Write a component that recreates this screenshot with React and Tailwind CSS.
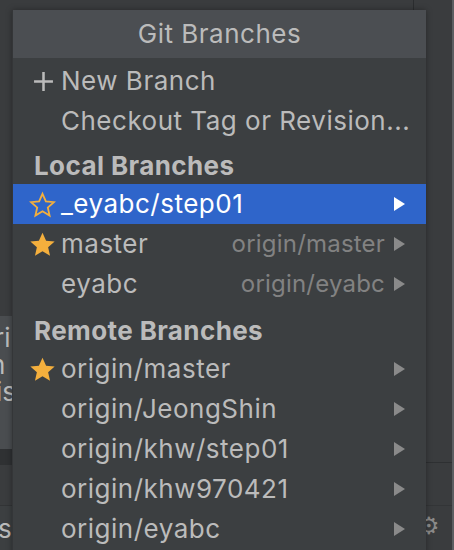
import React from "react";

const font = { fontFamily: "Inter, 'Noto Sans', sans-serif" };

function StarFilled() {
  return (
    <svg width="27" height="27" viewBox="0 0 24 24">
      <path d="M12 1.5l3.2 7.1 7.6.7-5.8 5.1 1.7 7.6L12 18l-6.7 4 1.7-7.6-5.8-5.1 7.6-.7z" fill="#f4af3d" />
    </svg>
  );
}

function StarOutline() {
  return (
    <svg width="27" height="27" viewBox="0 0 24 24">
      <path d="M12 2.5l3 6.7 7.2.7-5.5 4.8 1.6 7.1L12 18l-6.3 3.8 1.6-7.1-5.5-4.8 7.2-.7z" fill="none" stroke="#f4af3d" strokeWidth="1.6" strokeLinejoin="miter" />
    </svg>
  );
}

function Arrow({ color }) {
  return (
    <svg width="11" height="14" viewBox="0 0 11 14">
      <path d="M0 0L11 7L0 14Z" fill={color} />
    </svg>
  );
}

function Row({ icon, label, right, selected, arrow }) {
  return (
    <div className={`flex items-center h-[40px] pl-[16px] pr-[21px] whitespace-nowrap ${selected ? "bg-[#2f65ca]" : ""}`}>
      <div className="w-[32px] shrink-0 flex items-center justify-start">{icon}</div>
      <span className={`text-[26px] leading-none tracking-[0.5px] ${selected ? "text-white" : "text-[#bbbbbb]"}`}>{label}</span>
      <div className="flex-1" />
      {right && <span className="text-[24px] leading-none tracking-[0.2px] text-[#828282] mr-[9px]">{right}</span>}
      {arrow && <Arrow color={selected ? "#ffffff" : "#8a8a8a"} />}
    </div>
  );
}

function Section({ title, h }) {
  return (
    <div className={`flex items-end ${h} pl-[21px] pb-[5px] whitespace-nowrap`}>
      <span className="text-[26px] leading-none font-bold tracking-[0.4px] text-[#bbbbbb]">{title}</span>
    </div>
  );
}

export default function App() {
  return (
    <div className="relative w-[454px] h-[550px] overflow-hidden bg-[#3a3c3e] flex" style={font}>
      {/* background IDE: left strip */}
      <div className="w-[12px] flex flex-col shrink-0">
        <div className="h-[316px] bg-[#3a3c3e]" />
        <div className="h-[133px] bg-[#4a4d50] overflow-hidden text-[26px] text-[#bbbbbb] leading-[27px] pt-[8px]">
          <div className="-ml-[6px]">ri</div>
          <div className="-ml-[10px]">n</div>
          <div className="-ml-[4px]">is</div>
        </div>
        <div className="h-[16px] bg-[#2f3133]" />
        <div className="h-[41px] bg-[#3a3c3e] border-b border-[#323436]" />
        <div className="flex-1 bg-[#3c3f41] overflow-hidden text-[26px] text-[#bbbbbb] leading-none pt-[10px] -ml-[2px]">s</div>
      </div>
      {/* middle */}
      <div className="w-[414px] shrink-0">
        <div className="w-[402px] h-[12px] border-r border-[#2b2d2f]" />
      </div>
      {/* right strip */}
      <div className="w-[26px] flex flex-col shrink-0">
        <div className="h-[463px] border-b border-[#2e3032]" />
        <div className="h-[43px] border-b border-[#333537]" />
        <div className="flex-1 text-[24px] text-[#8a8a8a] leading-none pt-[8px] -ml-[8px]">⚙</div>
      </div>
      <div className="w-[2px] bg-[#5b5e61] shrink-0" />

      {/* popup overlay */}
      <div className="absolute left-[12px] top-[10px] w-[414px] h-[560px] bg-[#3c3f41] border-l border-[#343638] shadow-[0_0_6px_rgba(0,0,0,0.35)]">
        <div className="h-[48px] bg-[#4b4e52] flex items-center justify-center">
          <span className="text-[26px] leading-none tracking-[0.5px] text-[#bbbbbb]">Git Branches</span>
        </div>
        <div className="pt-[3px]">
          <Row
            icon={
              <svg width="21" height="21" viewBox="0 0 20 20" className="ml-[4px]">
                <path d="M10 1v18M1 10h18" stroke="#bbbbbb" strokeWidth="2.4" />
              </svg>
            }
            label="New Branch"
          />
          <Row label="Checkout Tag or Revision..." />
          <Section title="Local Branches" h="h-[43px]" />
          <Row icon={<StarOutline />} label="_eyabc/step01" selected arrow />
          <Row icon={<StarFilled />} label="master" right="origin/master" arrow />
          <Row label="eyabc" right="origin/eyabc" arrow />
          <Section title="Remote Branches" h="h-[45px]" />
          <Row icon={<StarFilled />} label="origin/master" arrow />
          <Row label="origin/JeongShin" arrow />
          <Row label="origin/khw/step01" arrow />
          <Row label="origin/khw970421" arrow />
          <Row label="origin/eyabc" arrow />
        </div>
      </div>
    </div>
  );
}
